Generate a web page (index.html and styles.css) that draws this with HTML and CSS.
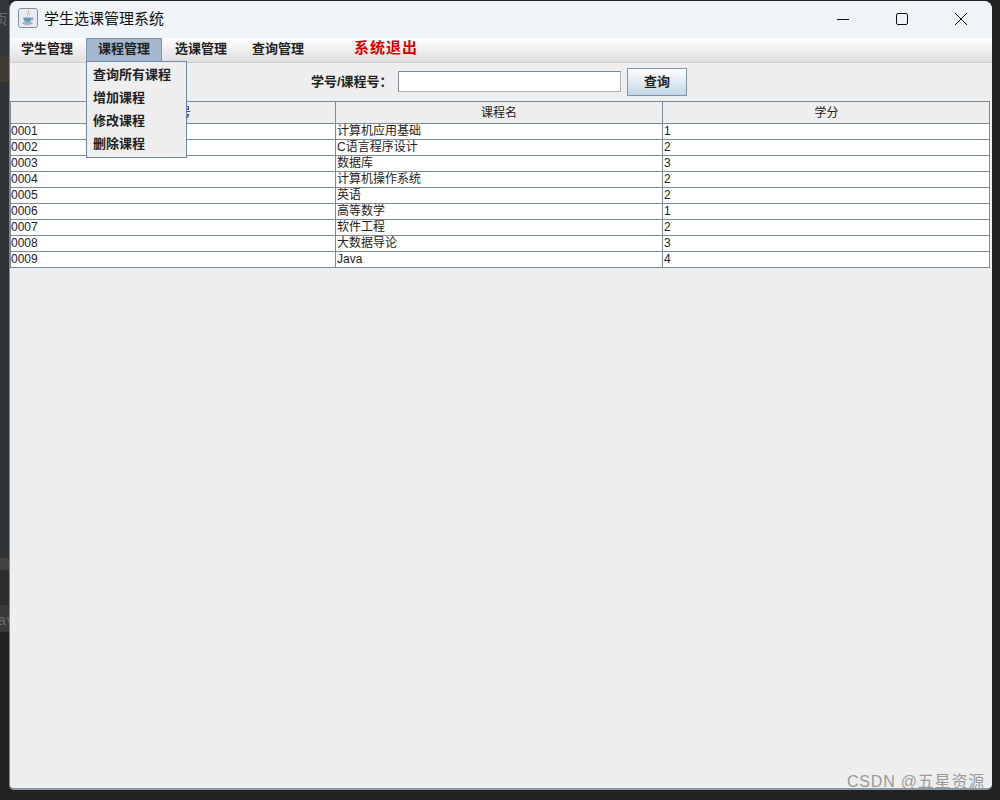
FILE: index.html
```html
<!DOCTYPE html>
<html lang="zh-CN">
<head>
    <meta charset="UTF-8">
    <title>学生选课管理系统</title>
    <link rel="stylesheet" href="styles.css">
</head>
<body>
    <!-- desktop behind the window -->
    <div class="desk-strip"></div>
    <div class="desk-glyph desk-glyph-top">页</div>
    <div class="desk-glyph desk-glyph-low">av</div>

    <div class="window">
        <div class="titlebar">
            <div class="app-icon">
                <svg width="20" height="20" viewBox="0 0 20 20">
                    <rect x="0.5" y="0.5" width="19" height="19" rx="2.5" fill="#e6ebf1" stroke="#7d8fa3"/>
                    <path d="M10.5 2.5c1.7 1.8-1.6 2.8-.6 5.2-2-1.5.8-3.2.6-5.2z" fill="#e0762a"/>
                    <path d="M12.2 4.6c.7 1.4-1.2 1.8-.6 3.4-1.3-1.1.4-2 .6-3.4z" fill="#e8923f"/>
                    <path d="M5.5 9.5h8v1.6c0 1.9-1.6 2.9-4 2.9s-4-1-4-2.9z" fill="#6f94b3"/>
                    <path d="M13.5 10h1.2c1 0 1 1.8-1.4 2" fill="none" stroke="#6f94b3"/>
                    <path d="M4.5 15h10" stroke="#4f7fa8" stroke-width="1.2"/>
                    <path d="M6.5 16.6h6" stroke="#9db4c8"/>
                </svg>
            </div>
            <span class="title">学生选课管理系统</span>
            <div class="win-controls">
                <button class="win-btn">
                    <svg width="14" height="14" viewBox="0 0 14 14"><path d="M1 7.5h12" stroke="#111" stroke-width="1"/></svg>
                </button>
                <button class="win-btn">
                    <svg width="14" height="14" viewBox="0 0 14 14"><rect x="1.5" y="1.5" width="11" height="11" rx="1.5" fill="none" stroke="#111"/></svg>
                </button>
                <button class="win-btn">
                    <svg width="14" height="14" viewBox="0 0 14 14"><path d="M1 1l12 12M13 1L1 13" stroke="#111" stroke-width="1"/></svg>
                </button>
            </div>
        </div>

        <nav class="menubar">
            <a class="menu-item menu-first">学生管理</a>
            <a class="menu-item menu-open">课程管理</a>
            <a class="menu-item">选课管理</a>
            <a class="menu-item">查询管理</a>
            <a class="menu-exit">系统退出</a>
        </nav>

        <ul class="dropdown">
            <li>查询所有课程</li>
            <li>增加课程</li>
            <li>修改课程</li>
            <li>删除课程</li>
        </ul>

        <div class="content">
            <form class="search-row">
                <label class="search-label" for="keyword">学号/课程号：</label>
                <input class="search-input" id="keyword" type="text">
                <button class="search-btn" type="button">查询</button>
            </form>

            <table class="course-table">
                <colgroup>
                    <col class="col-id">
                    <col class="col-name">
                    <col class="col-credit">
                </colgroup>
                <thead>
                    <tr><th>课程号</th><th>课程名</th><th class="th-credit">学分</th></tr>
                </thead>
                <tbody>
                    <tr><td>0001</td><td>计算机应用基础</td><td>1</td></tr>
                    <tr><td>0002</td><td>C语言程序设计</td><td>2</td></tr>
                    <tr><td>0003</td><td>数据库</td><td>3</td></tr>
                    <tr><td>0004</td><td>计算机操作系统</td><td>2</td></tr>
                    <tr><td>0005</td><td>英语</td><td>2</td></tr>
                    <tr><td>0006</td><td>高等数学</td><td>1</td></tr>
                    <tr><td>0007</td><td>软件工程</td><td>2</td></tr>
                    <tr><td>0008</td><td>大数据导论</td><td>3</td></tr>
                    <tr><td>0009</td><td>Java</td><td>4</td></tr>
                </tbody>
            </table>
        </div>
    </div>

    <div class="watermark">CSDN @五星资源</div>
</body>
</html>
```

FILE: styles.css
```css
* {
    margin: 0;
    padding: 0;
    box-sizing: border-box;
}

html, body {
    height: 800px;
    overflow: hidden;
}

body {
    background: #222222;
    padding: 1px 8px 10px 9px;
    font-family: "Liberation Sans", "Noto Sans CJK SC", sans-serif;
    color: #222;
    position: relative;
}

/* Desktop leftovers around the window */
.desk-strip {
    position: absolute;
    left: 0;
    top: 0;
    width: 9px;
    height: 632px;
    background: linear-gradient(
        #34383a 57px,
        #403c34 57px, #403c34 82px,
        #303336 82px, #303336 558px,
        #404244 558px, #404244 570px,
        #2d2e30 570px, #2d2e30 605px,
        #39393b 605px
    );
}

.desk-glyph {
    position: absolute;
    color: #6e6e6e;
    font-size: 14px;
    line-height: 16px;
}

.desk-glyph-top {
    top: 11px;
    left: -6px;
}

.desk-glyph-low {
    top: 612px;
    left: -2px;
    width: 11px;
    overflow: hidden;
    letter-spacing: 1px;
}

/* Window */
.window {
    position: relative;
    height: 789px;
    background: #eeeeee;
    border-radius: 8px 8px 5px 5px;
    border-left: 1px solid #7d8b99;
    border-bottom: 2px solid #8a97a3;
    overflow: hidden;
    display: flex;
    flex-direction: column;
}

.titlebar {
    height: 37px;
    flex: none;
    background: #eff4f9;
    display: flex;
    align-items: center;
    padding: 0 0 4px 8px;
}

.app-icon {
    width: 20px;
    height: 20px;
    margin-right: 6px;
}

.title {
    font-size: 15px;
    color: #111;
}

.win-controls {
    margin: 0 0 -2px auto;
    display: flex;
    padding-right: 2px;
}

.win-btn {
    width: 59px;
    height: 35px;
    background: none;
    border: none;
    display: flex;
    align-items: center;
    justify-content: center;
}

/* Menu bar */
.menubar {
    height: 25px;
    flex: none;
    background: linear-gradient(#ffffff, #dedede);
    border-bottom: 1px solid #cccccc;
    display: flex;
    font-size: 13px;
    font-weight: bold;
    line-height: 21px;
}

.menu-item {
    width: 76px;
    margin-left: 1px;
    text-align: center;
    color: #222;
    height: 24px;
}

.menu-first {
    width: 74px;
    margin: 0 1px 0 0;
}

.menu-open {
    background: #a3b8cc;
    border: 1px solid #7f94ab;
    border-bottom: none;
    line-height: 20px;
}

.menu-exit {
    margin-left: 38px;
    font-size: 15px;
    color: #d40000;
    line-height: 20px;
    letter-spacing: 1px;
}

.dropdown {
    position: absolute;
    left: 76px;
    top: 60px;
    width: 101px;
    height: 97px;
    background: #eeeeee;
    border: 1px solid #6f87a5;
    list-style: none;
    font-size: 13px;
    font-weight: bold;
    padding-top: 1px;
    z-index: 2;
}

.dropdown li {
    height: 23px;
    line-height: 23px;
    padding-left: 6px;
}

/* Search + table */
.content {
    flex: 1;
}

.search-row {
    height: 38px;
    display: flex;
    align-items: center;
    padding: 0 0 1px 301px;
}

.search-label {
    font-size: 13px;
    font-weight: bold;
    width: 87px;
    margin-bottom: 2px;
}

.search-input {
    width: 223px;
    height: 21px;
    background: #fff;
    border: 1px solid #7a8a99;
    border-right-color: #a9b4bf;
    border-bottom-color: #a9b4bf;
}

.search-btn {
    width: 60px;
    height: 28px;
    margin-left: 6px;
    padding-bottom: 2px;
    font-family: inherit;
    font-size: 13px;
    font-weight: bold;
    color: #222;
    background: linear-gradient(#ffffff, #c4d5e6);
    border: 1px solid #7f94ab;
}

.course-table {
    width: 979px;
    table-layout: fixed;
    border-collapse: collapse;
    font-size: 12px;
    background: #fff;
    border: 1px solid #7a8a99;
}

.col-id {
    width: 325px;
}

.col-name,
.col-credit {
    width: 327px;
}

.course-table th {
    height: 22px;
    background: #eeeeee;
    font-weight: normal;
    text-align: center;
    border: 1px solid #7a8a99;
    line-height: 19px;
    padding-top: 2px;
}

.course-table .th-credit {
    padding-left: 1px;
}

.course-table td {
    height: 16px;
    line-height: 15px;
    padding: 0 0 0 1px;
    border: 1px solid #7a8a99;
    overflow: hidden;
}

.course-table td:first-child {
    padding-left: 0;
}

.watermark {
    position: absolute;
    right: 15px;
    top: 772px;
    font-size: 16px;
    line-height: 20px;
    color: #9a9a9a;
    letter-spacing: 0.8px;
}
```
